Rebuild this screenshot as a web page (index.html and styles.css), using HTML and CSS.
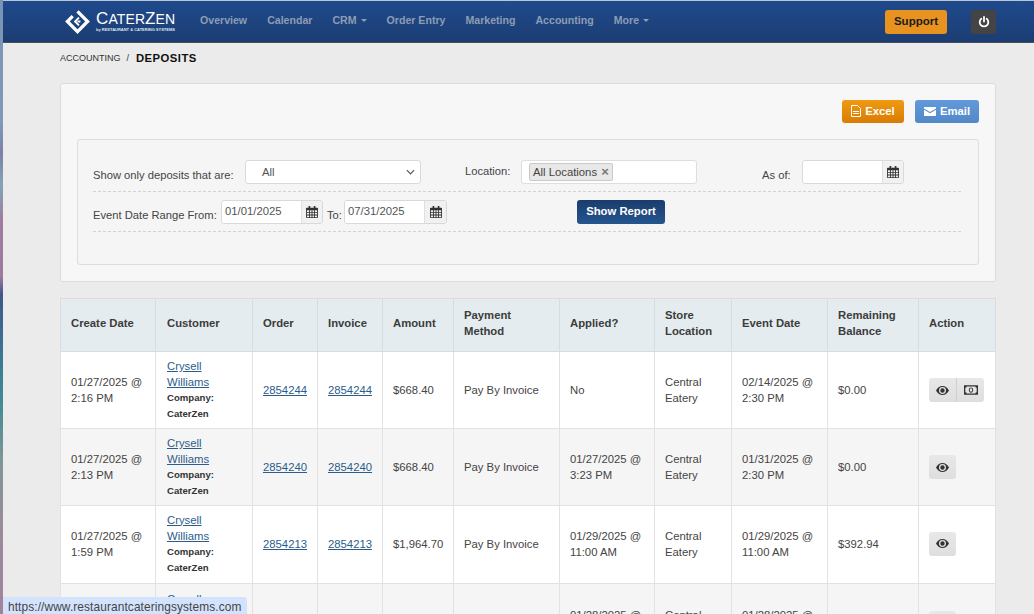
FILE: index.html
```html
<!DOCTYPE html>
<html lang="en">
<head>
<meta charset="utf-8">
<title>Deposits</title>
<link rel="stylesheet" href="styles.css">
</head>
<body>
<svg class="defs" width="0" height="0" aria-hidden="true">
  <symbol id="cal" viewBox="0 0 14 14"><path fill="currentColor" d="M3 0h2v2h4V0h2v2h2.200c.5 0 .8.300.8.800v10.400c0 .5-.3.800-.8.800H.8c-.5 0-.8-.3-.8-.8V2.800c0-.5.300-.8.800-.8H3zM1 5v2h2.500V5zm3.500 0v2h2V5zm3 0v2h2V5zm3 0v2H13V5zM1 8v2h2.500V8zm3.500 0v2h2V8zm3 0v2h2V8zm3 0v2H13V8zM1 11v2h2.500v-2zm3.500 0v2h2v-2zm3 0v2h2v-2zm3 0v2H13v-2z"/></symbol>
  <symbol id="eye" viewBox="0 0 16 11"><path fill="currentColor" fill-rule="evenodd" d="M8 0c3.500 0 6.400 2.200 8 5.500C14.400 8.800 11.500 11 8 11S1.600 8.800 0 5.500C1.600 2.200 4.500 0 8 0zM8 1.200a4.300 4.300 0 1 0 0 8.600 4.300 4.300 0 0 0 0-8.600zM8 2.800a2.700 2.700 0 1 1 0 5.400 2.700 2.700 0 0 1 0-5.400z"/></symbol>
  <symbol id="money" viewBox="0 0 16 11"><path fill="currentColor" fill-rule="evenodd" d="M0 0h16v11H0zM3 1.500A1.500 1.500 0 0 1 1.500 3v5A1.500 1.500 0 0 1 3 9.500h10A1.500 1.500 0 0 1 14.500 8V3A1.500 1.500 0 0 1 13 1.500zM8 2.500c1.500 0 2.500 1.300 2.500 3s-1 3-2.500 3-2.500-1.300-2.500-3 1-3 2.500-3zm0 1c-.9 0-1.400.9-1.400 2s.5 2 1.400 2 1.400-.9 1.400-2-.5-2-1.400-2z"/></symbol>
</svg>
<div class="window">
  <div class="wallpaper"></div>
  <div class="app">
    <header class="topbar">
      <div class="brand">
        <svg class="logo-mark" viewBox="0 0 26 26" width="25" height="25" aria-hidden="true">
          <path fill="none" stroke="#fff" stroke-width="3.400" d="M13 2.500 23.500 13 13 23.500 2.500 13 8 7.500"/>
          <path fill="none" stroke="#fff" stroke-width="2" d="M14.500 9 10.500 13l4 4"/>
          <path fill="#fff" d="M13 12h3v2h-3z"/>
        </svg>
        <div class="brand-text">
          <div class="brand-name">C<small>ATER</small>Z<small>EN</small></div>
          <div class="brand-sub">by RESTAURANT &amp; CATERING SYSTEMS</div>
        </div>
      </div>
      <nav class="nav">
        <a>Overview</a><a>Calendar</a><a>CRM <i class="caret"></i></a><a>Order Entry</a><a>Marketing</a><a>Accounting</a><a>More <i class="caret"></i></a>
      </nav>
      <a class="support">Support</a>
      <a class="power">
        <svg viewBox="0 0 12 12" width="12" height="12" aria-hidden="true"><path fill="none" stroke="#fff" stroke-width="1.800" stroke-linecap="round" d="M3.300 2.800a4.300 4.300 0 1 0 5.400 0M6 1v4.500"/></svg>
      </a>
    </header>

    <main class="content">
      <div class="crumbs"><span class="crumb">ACCOUNTING</span><span class="sep">/</span><strong class="crumb-now">DEPOSITS</strong></div>

      <section class="panel">
        <div class="actions">
          <a class="btn btn-excel"><svg viewBox="0 0 10 12" width="10" height="12" aria-hidden="true"><path fill="none" stroke="#fff" d="M.5.500h6l3 3v8H.5z"/><path fill="#fff" d="M2 6h6v1H2zm0 2h6v1H2z"/></svg>Excel</a>
          <a class="btn btn-email"><svg viewBox="0 0 12 9" width="12" height="9" aria-hidden="true"><path fill="#fff" d="M0 0h12v1.500L6 5 0 1.500zm0 2.800 6 3.500 6-3.500V9H0z"/></svg>Email</a>
        </div>
        <div class="filters">
          <div class="frow frow-a">
            <label class="lbl lbl-low w-status">Show only deposits that are:</label>
            <div class="select"><span>All</span><svg viewBox="0 0 10 6" width="9" height="6" aria-hidden="true"><path fill="none" stroke="#555" stroke-width="1.300" d="M1 1l4 4 4-4"/></svg></div>
            <label class="lbl w-loc">Location:</label>
            <div class="tags"><span class="tag">All Locations <b>×</b></span></div>
            <label class="lbl lbl-low w-asof">As of:</label>
            <div class="date"><span class="date-input"></span><span class="date-add"><svg width="12" height="12" aria-hidden="true"><use href="#cal"/></svg></span></div>
          </div>
          <div class="frow frow-b">
            <label class="lbl lbl-low w-range">Event Date Range From:</label>
            <div class="date"><span class="date-input">01/01/2025</span><span class="date-add"><svg width="12" height="12" aria-hidden="true"><use href="#cal"/></svg></span></div>
            <label class="lbl lbl-low w-to">To:</label>
            <div class="date date-wide"><span class="date-input">07/31/2025</span><span class="date-add"><svg width="12" height="12" aria-hidden="true"><use href="#cal"/></svg></span></div>
            <a class="btn-report">Show Report</a>
          </div>
        </div>
      </section>

      <table class="grid">
        <thead>
          <tr>
            <th>Create Date</th><th>Customer</th><th>Order</th><th>Invoice</th><th>Amount</th><th>Payment<br>Method</th><th>Applied?</th><th>Store<br>Location</th><th>Event Date</th><th>Remaining<br>Balance</th><th>Action</th>
          </tr>
        </thead>
        <tbody>
          <tr>
            <td>01/27/2025 @<br>2:16 PM</td>
            <td><a href="#">Crysell<br>Williams</a><div class="co">Company:<br>CaterZen</div></td>
            <td><a href="#">2854244</a></td><td><a href="#">2854244</a></td>
            <td>$668.40</td><td>Pay By Invoice</td><td>No</td><td>Central<br>Eatery</td><td>02/14/2025 @<br>2:30 PM</td><td>$0.00</td>
            <td><div class="acts"><span class="act"><svg width="13" height="9" aria-hidden="true"><use href="#eye"/></svg></span><span class="act"><svg width="14" height="10" aria-hidden="true"><use href="#money"/></svg></span></div></td>
          </tr>
          <tr>
            <td>01/27/2025 @<br>2:13 PM</td>
            <td><a href="#">Crysell<br>Williams</a><div class="co">Company:<br>CaterZen</div></td>
            <td><a href="#">2854240</a></td><td><a href="#">2854240</a></td>
            <td>$668.40</td><td>Pay By Invoice</td><td>01/27/2025 @<br>3:23 PM</td><td>Central<br>Eatery</td><td>01/31/2025 @<br>2:30 PM</td><td>$0.00</td>
            <td><div class="acts"><span class="act"><svg width="13" height="9" aria-hidden="true"><use href="#eye"/></svg></span></div></td>
          </tr>
          <tr>
            <td>01/27/2025 @<br>1:59 PM</td>
            <td><a href="#">Crysell<br>Williams</a><div class="co">Company:<br>CaterZen</div></td>
            <td><a href="#">2854213</a></td><td><a href="#">2854213</a></td>
            <td>$1,964.70</td><td>Pay By Invoice</td><td>01/29/2025 @<br>11:00 AM</td><td>Central<br>Eatery</td><td>01/29/2025 @<br>11:00 AM</td><td>$392.94</td>
            <td><div class="acts"><span class="act"><svg width="13" height="9" aria-hidden="true"><use href="#eye"/></svg></span></div></td>
          </tr>
          <tr>
            <td>01/27/2025 @<br>1:40 PM</td>
            <td><a href="#">Crysell<br>Williams</a><div class="co">Company:<br>CaterZen</div></td>
            <td><a href="#">2854200</a></td><td><a href="#">2854200</a></td>
            <td>$668.40</td><td>Pay By Invoice</td><td>01/28/2025 @<br>11:00 AM</td><td>Central<br>Eatery</td><td>01/28/2025 @<br>11:00 AM</td><td>$0.00</td>
            <td><div class="acts"><span class="act"><svg width="13" height="9" aria-hidden="true"><use href="#eye"/></svg></span></div></td>
          </tr>
        </tbody>
      </table>
    </main>
  </div>
</div>
<div class="status">https://www.restaurantcateringsystems.com</div>
</body>
</html>
```
FILE: styles.css
```css
* { box-sizing: border-box; }
html, body { margin: 0; height: 100%; overflow: hidden; }
body { font-family: "Liberation Sans", Arial, sans-serif; font-size: 11.300px; color: #444; background: #ebebeb; }
.defs { position: absolute; }
.window { display: flex; height: 614px; }
.wallpaper { flex: 0 0 3px; background: linear-gradient(180deg, #7a94b5 0, #7d9ab8 20%, #7f7fa8 25%, #80a5b5 30%, #a07ca0 36%, #a07a9c 45%, #3f5688 48%, #3a6f92 55%, #3f8a96 65%, #7f9696 75%, #9a8a9c 85%, #a0849c 100%); }
.app { flex: 1; min-width: 0; }

.topbar { height: 43px; display: flex; align-items: center; background: linear-gradient(180deg, #1f4a8d 0, #1c3d72 100%); border-top: 1px solid #b9c4d4; border-bottom: 1px solid #4a4f57; padding-left: 62px; }
.brand { display: flex; align-items: center; width: 135px; flex: none; }
.logo-mark { flex: none; margin-right: 6px; }
.brand-name { color: #fff; font-size: 17px; line-height: 15px; letter-spacing: .1px; white-space: nowrap; }
.brand-name small { font-size: 14px; }
.brand-sub { color: #dfe6f0; font-size: 4px; font-weight: 700; line-height: 6px; white-space: nowrap; }
.nav { display: flex; gap: 20px; flex: 1; padding-bottom: 3px; font-size: 10.600px; font-weight: 700; color: #8c9db4; }
.caret { display: inline-block; width: 0; height: 0; margin: 0 0 2px 1px; border-top: 3px solid #8c9db4; border-left: 3px solid transparent; border-right: 3px solid transparent; }
.support { width: 62px; height: 24px; line-height: 23px; text-align: center; font-size: 11.500px; font-weight: 700; color: #1c1c1c; background: #e8921f; border-radius: 3px; margin-right: 24px; }
.power { width: 25px; height: 24px; display: flex; align-items: center; justify-content: center; background: #444; border-radius: 3px; margin-right: 38px; }

.content { padding: 0 38px 0 57px; }
.crumbs { height: 40px; display: flex; align-items: center; padding-bottom: 11px; }
.crumb { font-size: 9px; color: #333; }
.sep { font-size: 9px; margin: 0 7px 0 6px; color: #333; }
.crumb-now { font-size: 11.300px; color: #111; letter-spacing: .45px; }

.panel { height: 199px; background: #f7f7f7; border: 1px solid #dcdcdc; border-radius: 3px; padding: 16px 16px 16px; }
.actions { display: flex; justify-content: flex-end; gap: 11px; height: 23px; }
.btn { display: flex; align-items: center; justify-content: center; gap: 4px; height: 23px; padding-bottom: 1px; border-radius: 3px; color: #fff; font-weight: 700; font-size: 11.300px; }
.btn-excel { width: 62px; background: linear-gradient(180deg, #f09a12, #d97c03); }
.btn-email { width: 64px; background: linear-gradient(180deg, #6199da, #5288c8); }

.filters { height: 126px; margin-top: 16px; background: #f5f5f5; border: 1px solid #dcdcdc; border-radius: 3px; padding: 20px 17px 0 15px; }
.frow { display: flex; align-items: flex-start; border-bottom: 1px dashed #d2d2d2; }
.frow-a { height: 32px; }
.frow-b { height: 40px; padding-top: 8px; }
.lbl { color: #444; line-height: 24px; white-space: nowrap; font-size: 11.200px; }
.lbl-low { padding-top: 3px; }
.w-status { width: 152px; }
.w-loc { width: 56px; margin-left: 44px; padding-bottom: 2px; line-height: 22px; }
.w-asof { width: 40px; margin-left: 65px; }
.w-range { width: 128px; }
.w-to { width: 21px; padding-left: 4px; }

.select { width: 176px; height: 24px; background: #fff; border: 1px solid #d9d9d9; border-radius: 3px; display: flex; align-items: center; justify-content: space-between; padding: 0 5px 0 16px; color: #555; }
.tags { width: 176px; height: 24px; background: #fff; border: 1px solid #dedede; border-radius: 3px; padding: 2px 7px; }
.tag { display: inline-block; height: 18px; line-height: 16px; padding: 0 3px; background: #e8e8e8; border: 1px solid #c9c9c9; border-radius: 2px; color: #444; }
.tag b { color: #777; font-size: 13px; margin-left: 1px; }
.date { display: flex; height: 24px; width: 102px; border: 1px solid #d9d9d9; border-radius: 3px; overflow: hidden; }
.date-wide { width: 103px; }
.date-input { flex: 0 0 79px; background: #fff; padding-left: 3px; line-height: 20px; color: #555; }
.date-add { flex: 1; display: flex; align-items: center; justify-content: center; background: #f1f1f1; border-left: 1px solid #e0e0e0; color: #333; }
.btn-report { width: 88px; height: 24px; margin-left: 130px; line-height: 23px; text-align: center; color: #fff; font-weight: 700; border-radius: 3px; background: linear-gradient(180deg, #1a3c6d, #25558e); }

.grid { width: 936px; margin-top: 16px; border-collapse: collapse; table-layout: fixed; background: #fff; }
.grid th:nth-child(1) { width: 95px; }
.grid th:nth-child(2) { width: 97px; }
.grid th:nth-child(3), .grid th:nth-child(4) { width: 65px; }
.grid th:nth-child(5) { width: 71px; }
.grid th:nth-child(6) { width: 106px; }
.grid th:nth-child(7) { width: 95px; }
.grid th:nth-child(8) { width: 77px; }
.grid th:nth-child(9) { width: 96px; }
.grid th:nth-child(10) { width: 91px; }
.grid th { height: 53px; padding: 0 10px 4px; text-align: left; line-height: 16px; font-weight: 700; color: #3c3c3c; background: #e4ecef; border: 1px solid #d5dde0; border-top: 1px solid #dcdcdc; }
.grid th:nth-child(2), .grid td:nth-child(2) { padding-left: 11px; }
.grid td { height: 78px; padding: 6px 10px; line-height: 16px; border: 1px solid #e2e2e2; vertical-align: middle; }
.grid tbody tr:nth-child(-n+2) td { height: 77px; }
.grid tbody tr:nth-child(3) td { padding-top: 5px; padding-bottom: 7px; }
.grid tbody tr:nth-child(even) td { background: #f5f5f5; }
.grid a { color: #2b5d8c; text-decoration: underline; }
.co { font-size: 9.600px; font-weight: 700; color: #333; }
.acts { display: flex; }
.act { width: 27px; height: 24px; display: flex; align-items: center; justify-content: center; background: linear-gradient(180deg, #e8e8e8, #dedede); color: #333; border-radius: 3px; }
.act + .act { width: 28px; margin-left: 0; border-left: 1px solid #cfcfcf; border-radius: 0 3px 3px 0; }
.act:first-child:not(:last-child) { border-radius: 3px 0 0 3px; }

.status { position: absolute; left: 3px; bottom: 0; width: 244px; height: 17px; overflow: hidden; padding-left: 5px; line-height: 21px; font-size: 11.900px; letter-spacing: .1px; color: #444; background: #d3e3fd; border-radius: 0 3px 0 0; }
```
